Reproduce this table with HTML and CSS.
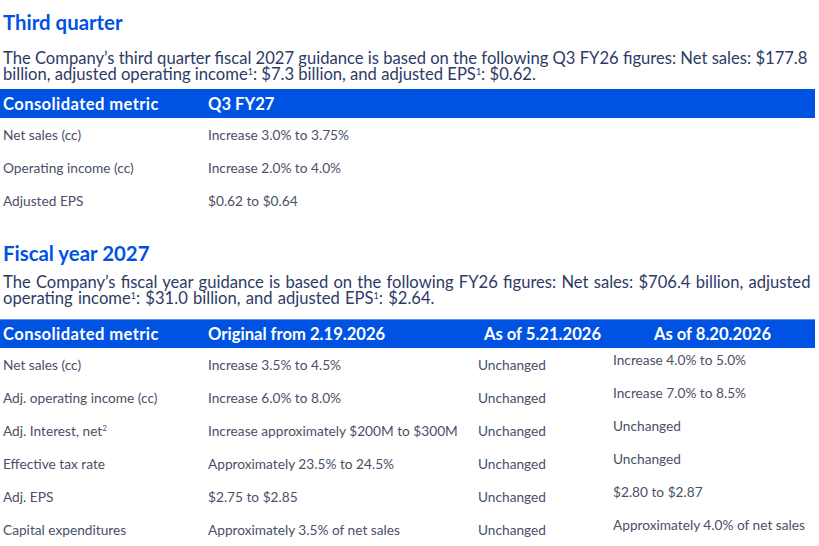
FILE: index.html
```html
<!DOCTYPE html>
<html lang="en">
<head>
<meta charset="utf-8">
<link rel="stylesheet" href="styles.css">
</head>
<body>
<section class="sec sec-q3">
  <h2 class="title">Third quarter</h2>
  <p class="lead">The Company’s third quarter fiscal 2027 guidance is based on the following Q3 FY26 figures: Net sales: $177.8 billion, adjusted operating income<sup>1</sup>: $7.3 billion, and adjusted EPS<sup>1</sup>: $0.62.</p>
  <div class="tbl tbl-q3">
    <div class="row head">
      <div class="c">Consolidated metric</div>
      <div class="c">Q3 FY27</div>
    </div>
    <div class="row">
      <div class="c">Net sales (cc)</div>
      <div class="c">Increase 3.0% to 3.75%</div>
    </div>
    <div class="row">
      <div class="c">Operating income (cc)</div>
      <div class="c">Increase 2.0% to 4.0%</div>
    </div>
    <div class="row">
      <div class="c">Adjusted EPS</div>
      <div class="c">$0.62 to $0.64</div>
    </div>
  </div>
</section>
<section class="sec sec-fy">
  <h2 class="title">Fiscal year 2027</h2>
  <p class="lead">The Company’s fiscal year guidance is based on the following FY26 figures: Net sales: $706.4 billion, adjusted operating income<sup>1</sup>: $31.0 billion, and adjusted EPS<sup>1</sup>: $2.64.</p>
  <div class="tbl tbl-fy">
    <div class="row head">
      <div class="c">Consolidated metric</div>
      <div class="c">Original from 2.19.2026</div>
      <div class="c ctr">As of 5.21.2026</div>
      <div class="c ctr">As of 8.20.2026</div>
    </div>
    <div class="row">
      <div class="c">Net sales (cc)</div>
      <div class="c">Increase 3.5% to 4.5%</div>
      <div class="c">Unchanged</div>
      <div class="c up">Increase 4.0% to 5.0%</div>
    </div>
    <div class="row">
      <div class="c">Adj. operating income (cc)</div>
      <div class="c">Increase 6.0% to 8.0%</div>
      <div class="c">Unchanged</div>
      <div class="c up">Increase 7.0% to 8.5%</div>
    </div>
    <div class="row">
      <div class="c">Adj. Interest, net<sup>2</sup></div>
      <div class="c">Increase approximately $200M to $300M</div>
      <div class="c">Unchanged</div>
      <div class="c up">Unchanged</div>
    </div>
    <div class="row">
      <div class="c">Effective tax rate</div>
      <div class="c">Approximately 23.5% to 24.5%</div>
      <div class="c">Unchanged</div>
      <div class="c up">Unchanged</div>
    </div>
    <div class="row">
      <div class="c">Adj. EPS</div>
      <div class="c">$2.75 to $2.85</div>
      <div class="c">Unchanged</div>
      <div class="c up">$2.80 to $2.87</div>
    </div>
    <div class="row">
      <div class="c">Capital expenditures</div>
      <div class="c">Approximately 3.5% of net sales</div>
      <div class="c">Unchanged</div>
      <div class="c up">Approximately 4.0% of net sales</div>
    </div>
  </div>
</section>
</body>
</html>
```

FILE: styles.css
```css
html, body {
  margin: 0;
  padding: 0;
  background: #ffffff;
}
body {
  width: 819px;
  height: 546px;
  overflow: hidden;
  font-family: Lato, "Open Sans", Arial, sans-serif;
  color: #2e3a66;
}
.sec {
  display: flex;
  flex-direction: column;
}
.sec-q3 {
  padding-top: 10px;
}
.sec-fy {
  padding-top: 24px;
}
.title {
  margin: 0;
  padding-left: 3px;
  font-size: 20.4px;
  line-height: 24px;
  font-weight: 700;
  color: #0053e2;
}
.lead {
  margin: 0;
  padding-left: 3px;
  font-size: 16.6px;
  line-height: 16px;
  color: #2e3a66;
}
.sec-q3 .lead {
  margin-top: 16px;
}
.sec-fy .lead {
  margin-top: 9px;
  word-spacing: 1px;
}
.lead sup {
  font-size: 9px;
  line-height: 0;
  vertical-align: 5px;
}
.tbl {
  width: 815px;
  display: flex;
  flex-direction: column;
}
.tbl-q3 {
  margin-top: 7px;
}
.tbl-fy {
  margin-top: 13px;
}
.row {
  display: grid;
  height: 33px;
  align-items: center;
  font-size: 13.7px;
  color: #4a5068;
}
.tbl-q3 .row {
  grid-template-columns: 205px 1fr;
}
.tbl-fy .row {
  grid-template-columns: 205px 270px 135px 1fr;
}
.row.head {
  height: 29px;
  background: #0053e2;
  color: #ffffff;
  font-size: 16.6px;
  font-weight: 700;
}
.tbl-fy .row.head {
  border-top: 1px solid #5b8ff0;
  height: 28px;
}
.head .c:first-child {
  letter-spacing: 0.4px;
}
.c {
  padding-left: 3px;
  white-space: nowrap;
}
.c.ctr {
  padding-left: 0;
  text-align: center;
}
.c.up {
  align-self: start;
  padding-top: 3px;
}
.row sup {
  font-size: 8px;
  line-height: 0;
  vertical-align: 5px;
}
```
